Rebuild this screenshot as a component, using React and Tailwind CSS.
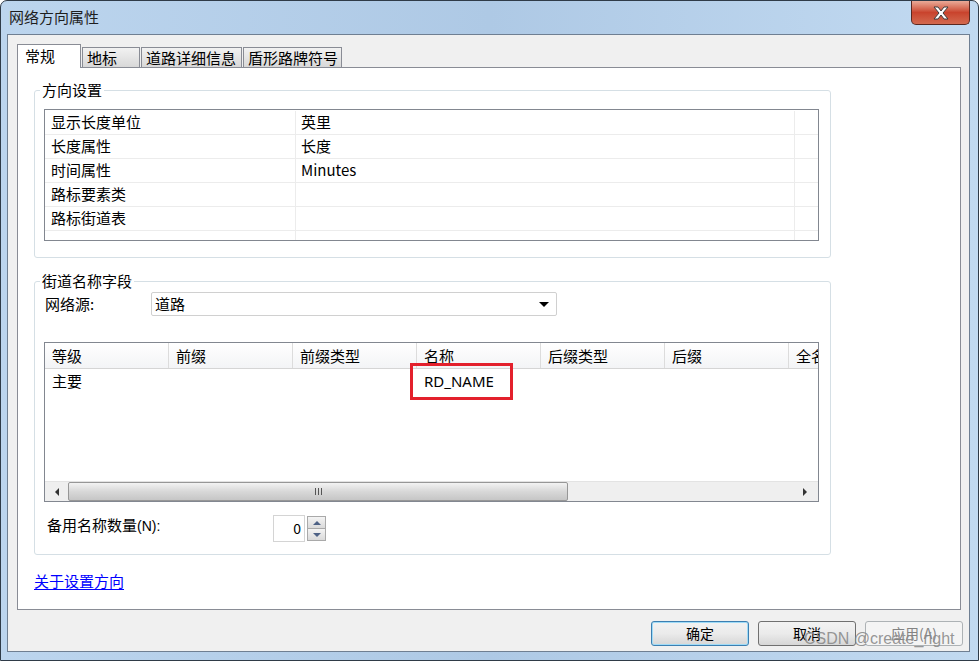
import React from "react";

const cjk = { fontFamily: '"Noto Sans CJK SC", "Noto Sans", sans-serif' };

const dirRows = [
  ["显示长度单位", "英里"],
  ["长度属性", "长度"],
  ["时间属性", "Minutes"],
  ["路标要素类", ""],
  ["路标街道表", ""],
  ["", ""],
];

const nameCols = ["等级", "前缀", "前缀类型", "名称", "后缀类型", "后缀", "全名"];

const CloseButton = () => (
  <div className="w-[59px] h-[24px] mr-[8px] rounded-b-[5px] border border-t-0 border-[#5a2820] bg-gradient-to-b from-[#e9aa98] via-[#c9432d] to-[#d3694f] flex items-center justify-center">
    <svg width="22" height="16" viewBox="0 0 22 16">
      <path
        d="M4 2 L8 2 L11 6 L14 2 L18 2 L13 8 L18 14 L14 14 L11 10 L8 14 L4 14 L9 8 Z"
        fill="#fff"
        stroke="#3d3d3d"
        strokeWidth="1"
        strokeLinejoin="round"
      />
    </svg>
  </div>
);

const Tab = ({ label, active, width }) =>
  active ? (
    <div
      className="relative z-10 -mb-px h-[24px] bg-white border border-b-0 border-[#898c95] pl-[7px] pt-[1px] text-[15px] leading-[20px]"
      style={{ width }}
    >
      {label}
    </div>
  ) : (
    <div
      className="h-[20px] border border-b-0 border-[#898c95] bg-gradient-to-b from-[#f2f2f2] to-[#d8d8d8] pl-[4px] text-[15px] leading-[19px]"
      style={{ width }}
    >
      {label}
    </div>
  );

const Legend = ({ children }) => (
  <legend className="-ml-[4px] px-[2px] text-[15px] leading-[20px]">{children}</legend>
);

const Scrollbar = () => (
  <div className="h-[20px] flex border-t border-[#e3e3e3] bg-[#efefef]">
    <div className="w-[23px] flex items-center justify-center">
      <div className="w-0 h-0 border-y-[4px] border-y-transparent border-r-[4px] border-r-[#333]" />
    </div>
    <div className="w-[500px] h-[19px] rounded-[2px] border border-[#979797] bg-gradient-to-b from-[#f3f3f3] via-[#d8d8d8] to-[#c6c6c6] flex items-center justify-center gap-[2px]">
      <div className="w-px h-[7px] bg-[#555]" />
      <div className="w-px h-[7px] bg-[#555]" />
      <div className="w-px h-[7px] bg-[#555]" />
    </div>
    <div className="flex-1 flex items-center justify-end pr-[11px]">
      <div className="w-0 h-0 border-y-[4px] border-y-transparent border-l-[4px] border-l-[#333]" />
    </div>
  </div>
);

const Spinner = () => (
  <div className="flex items-center">
    <div className="w-[32px] h-[27px] border border-[#d4d4d4] bg-white text-right pr-[3px] text-[14px] leading-[24px]">
      0
    </div>
    <div className="ml-[2px] flex flex-col">
      <div className="w-[19px] h-[13px] border border-[#a9a9a9] bg-gradient-to-b from-[#f4f4f4] to-[#dadada] flex items-center justify-center">
        <div className="w-0 h-0 border-x-[4px] border-x-transparent border-b-[4px] border-b-[#4d6185]" />
      </div>
      <div className="w-[19px] h-[13px] -mt-px border border-[#a9a9a9] bg-gradient-to-b from-[#f4f4f4] to-[#dadada] flex items-center justify-center">
        <div className="w-0 h-0 border-x-[4px] border-x-transparent border-t-[4px] border-t-[#4d6185]" />
      </div>
    </div>
  </div>
);

const Button = ({ children, variant }) => {
  if (variant === "focus")
    return (
      <div className="w-[98px] h-[25px] rounded-[3px] border border-[#3c7fb1] shadow-[inset_0_0_0_1px_#9fdbf7] bg-gradient-to-b from-[#f2f2f2] via-[#ebebeb] to-[#d6d6d6] flex items-center justify-center text-[14px]">
        {children}
      </div>
    );
  if (variant === "disabled")
    return (
      <div className="w-[98px] h-[25px] rounded-[3px] border border-[#adb2b5] bg-[#f4f4f4] flex items-center justify-center text-[14px] text-[#838383]">
        {children}
      </div>
    );
  return (
    <div className="w-[98px] h-[25px] rounded-[3px] border border-[#707070] bg-gradient-to-b from-[#f2f2f2] via-[#ebebeb] to-[#d6d6d6] flex items-center justify-center text-[14px]">
      {children}
    </div>
  );
};

export default function App() {
  return (
    <div
      className="relative w-[979px] h-[661px] overflow-hidden rounded-t-[7px] border border-[#2f3b48] bg-gradient-to-r from-[#bcd5ee] via-[#aec9e5] to-[#c2daf1] flex flex-col text-black"
      style={cjk}
    >
      {/* title bar */}
      <div className="h-[33px] flex justify-between">
        <div className="self-center pl-[8px] text-[15px] text-[#1e1e1e]">网络方向属性</div>
        <CloseButton />
      </div>

      {/* client */}
      <div className="flex-1 ml-[6px] mr-[8px] mb-[8px] border border-[#6f7f92] bg-[#f0f0f0] pl-[9px] pt-[9px]">
        <div className="flex items-end gap-[1px]">
          <Tab label="常规" active width={64} />
          <Tab label="地标" width={58} />
          <Tab label="道路详细信息" width={101} />
          <Tab label="盾形路牌符号" width={99} />
        </div>

        {/* tab panel */}
        <div className="w-[944px] h-[543px] border border-[#898c95] bg-white pl-[16px]">
          <fieldset className="mt-[12px] w-[797px] border border-[#d5dfe5] rounded-[3px] px-[9px] pb-[16px]">
            <Legend>方向设置</Legend>
            <div className="mt-[9px] w-[775px] h-[132px] border border-[#828790] pt-px overflow-hidden">
              {dirRows.map(([k, v], i) => (
                <div key={i} className="flex h-[24px] border-b border-[#ececec] text-[15px] leading-[22px]">
                  <div className="w-[251px] border-r border-[#ececec] pl-[6px]">{k}</div>
                  <div className="w-[499px] border-r border-[#ececec] pl-[5px]">{v}</div>
                  <div className="flex-1" />
                </div>
              ))}
            </div>
          </fieldset>

          <fieldset className="mt-[13px] w-[797px] border border-[#d5dfe5] rounded-[3px] px-[9px] pb-[12px]">
            <Legend>街道名称字段</Legend>
            <div className="mt-[1px] flex items-center">
              <div className="w-[107px] pl-[1px] text-[15px]">网络源:</div>
              <div className="w-[406px] h-[24px] rounded-[2px] border border-[#d0d0d0] flex items-center justify-between pl-[3px] pr-[7px] text-[15px]">
                <span>道路</span>
                <div className="w-0 h-0 border-x-[5px] border-x-transparent border-t-[5px] border-t-black" />
              </div>
            </div>

            <div className="relative mt-[26px] w-[775px] h-[160px] border border-[#828790] flex flex-col">
              <div className="flex h-[26px] border-b border-[#d5d5d5] bg-gradient-to-b from-white to-[#f3f4f6] overflow-hidden text-[15px] leading-[25px]">
                {nameCols.map((c) => (
                  <div key={c} className="w-[124px] shrink-0 border-r border-[#dcdcdc] pl-[7px]">
                    {c}
                  </div>
                ))}
              </div>
              <div className="flex-1 text-[15px] leading-[24px]">
                <div className="flex h-[24px]">
                  <div className="w-[372px] pl-[7px]">主要</div>
                  <div className="pl-[7px] font-['Noto_Sans',sans-serif]">RD_NAME</div>
                </div>
              </div>
              <Scrollbar />
              <div className="absolute left-[365px] top-[20px] w-[103px] h-[37px] border-[3px] border-[#e3202c]" />
            </div>

            <div className="mt-[13px] flex items-start">
              <div className="w-[229px] pl-[3px] text-[15px] leading-[20px]">
                备用名称数量<span className="font-['Liberation_Sans',sans-serif] text-[14px]">(N):</span>
              </div>
              <Spinner />
            </div>
          </fieldset>

          <div className="mt-[15px] text-[15px] text-[#0000ff] underline underline-offset-2">关于设置方向</div>
        </div>

        {/* buttons */}
        <div className="mt-[11px] flex justify-end gap-[9px] pr-[6px]">
          <Button variant="focus">确定</Button>
          <Button>取消</Button>
          <Button variant="disabled">应用(A)</Button>
        </div>
      </div>

      <div className="absolute left-[803px] top-[626px] text-[16px] text-[#8a8a8a]/90 font-['Liberation_Sans',sans-serif]">
        CSDN @create_right
      </div>
    </div>
  );
}
